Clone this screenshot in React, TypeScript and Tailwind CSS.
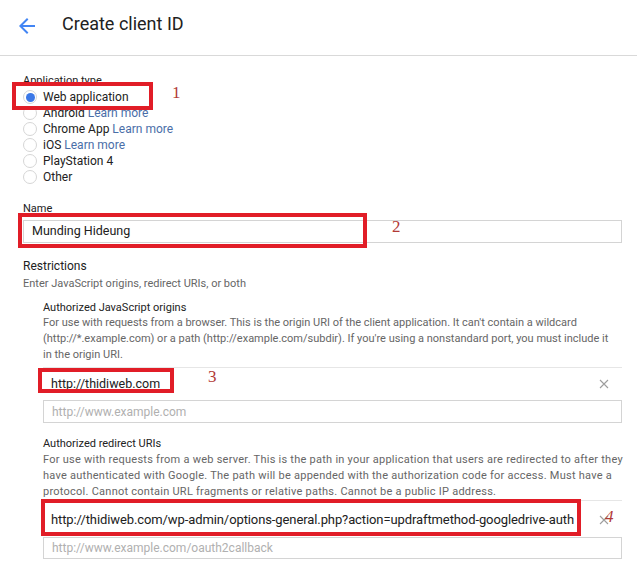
import React from "react";

const types = [
  { label: "Web application", learn: false, checked: true },
  { label: "Android", learn: true, checked: false },
  { label: "Chrome App", learn: true, checked: false },
  { label: "iOS", learn: true, checked: false },
  { label: "PlayStation 4", learn: false, checked: false },
  { label: "Other", learn: false, checked: false },
];

const originHelp = [
  "For use with requests from a browser. This is the origin URI of the client application. It can't contain a wildcard",
  "(http://*.example.com) or a path (http://example.com/subdir). If you're using a nonstandard port, you must include it",
  "in the origin URI.",
];

const redirectHelp = [
  "For use with requests from a web server. This is the path in your application that users are redirected to after they",
  "have authenticated with Google. The path will be appended with the authorization code for access. Must have a",
  "protocol. Cannot contain URL fragments or relative paths. Cannot be a public IP address.",
];

const Close: React.FC = () => (
  <svg width="10" height="10" viewBox="0 0 10 10" className="text-[#9e9e9e]">
    <path d="M1 1L9 9M9 1L1 9" stroke="currentColor" strokeWidth="1.1" />
  </svg>
);

const Radio: React.FC<{ checked: boolean }> = ({ checked }) => (
  <span className="flex h-[14px] w-[14px] items-center justify-center rounded-full border border-[#d6d6d6] bg-white">
    {checked && <span className="h-[9px] w-[9px] rounded-full bg-[#3b78e7]"></span>}
  </span>
);

// red annotation box + number drawn over the form
const Mark: React.FC<{ box: string; num: string; numPos: string; italic?: boolean }> = ({ box, num, numPos, italic }) => (
  <>
    <div className={"pointer-events-none absolute border-4 border-[#e11d27] " + box}></div>
    <span
      className={"absolute text-[17px] leading-none text-[#b23a36] " + numPos + (italic ? " italic" : "")}
      style={{ fontFamily: '"Liberation Serif", serif' }}
    >
      {num}
    </span>
  </>
);

export default function App() {
  return (
    <div className="relative h-[565px] w-[637px] overflow-hidden bg-white text-[#212121]" style={{ fontFamily: "Roboto, sans-serif" }}>
      <header className="flex h-[56px] border-b border-[#d9d9d9]">
        <div className="flex h-[46px] items-center pl-[15px]">
          <svg width="24" height="24" viewBox="0 0 24 24" className="mt-[5px] text-[#4285f4]">
            <path fill="currentColor" d="M20 11H7.83l5.59-5.59L12 4l-8 8 8 8 1.41-1.41L7.83 13H20v-2z" />
          </svg>
          <h1 className="ml-[23px] text-[18px] font-normal">Create client ID</h1>
        </div>
      </header>

      <main className="pl-[23px] pr-[15px] pt-[17px]">
        <div className="text-[11px] leading-[16px]">Application type</div>
        <ul className="text-[12px] leading-[16px]">
          {types.map((t) => (
            <li key={t.label} className="flex h-[16px] items-center gap-[6px]">
              <Radio checked={t.checked} />
              <span>
                {t.label}
                {t.learn && <span className="text-[#4a6ea8]"> Learn more</span>}
              </span>
            </li>
          ))}
        </ul>

        <div className="mt-[16px] text-[11px] leading-[16px]">Name</div>
        <div className="mt-[3px] flex h-[23px] items-center border border-[#d4d4d4] pl-[8px] text-[12.5px]">Munding Hideung</div>

        <div className="mt-[15px] text-[12px] leading-[17px]">Restrictions</div>
        <div className="text-[11px] leading-[17px] text-[#666]">Enter JavaScript origins, redirect URIs, or both</div>

        <section className="ml-[20px] mt-[9px]">
          <div className="text-[11px] leading-[14px] text-[#222]">Authorized JavaScript origins</div>
          <div className="text-[11px] leading-[16px] text-[#666]">
            {originHelp.map((line) => (
              <div key={line} className="whitespace-nowrap">
                {line}
              </div>
            ))}
          </div>
          <div className="mt-[4px] flex h-[33px] items-center justify-between border-t border-[#e6e6e6] pl-[8px] pr-[13px] text-[12.5px]">
            <span>http://thidiweb.com</span>
            <Close />
          </div>
          <div className="flex h-[23px] items-center border border-[#d4d4d4] pl-[8px] text-[12px] text-[#b0b0b0]">http://www.example.com</div>
        </section>

        <section className="ml-[20px] mt-[13px]">
          <div className="text-[11px] leading-[16px] text-[#222]">Authorized redirect URIs</div>
          <div className="text-[11px] leading-[16px] tracking-[0.25px] text-[#666]">
            {redirectHelp.map((line) => (
              <div key={line} className="whitespace-nowrap">
                {line}
              </div>
            ))}
          </div>
          <div className="flex h-[37px] items-center justify-between border-t border-[#e6e6e6] pl-[8px] pr-[13px] pt-[2px] text-[13px] tracking-[-0.1px]">
            <span>http://thidiweb.com/wp-admin/options-general.php?action=updraftmethod-googledrive-auth</span>
            <Close />
          </div>
          <div className="flex h-[22px] items-center border border-[#d4d4d4] pl-[8px] text-[12px] text-[#b0b0b0]">
            http://www.example.com/oauth2callback
          </div>
        </section>
      </main>

      <Mark box="left-[12px] top-[82px] h-[28px] w-[141px]" num="1" numPos="left-[172px] top-[84px]" />
      <Mark box="left-[18px] top-[213px] h-[35px] w-[349px]" num="2" numPos="left-[392px] top-[218px]" />
      <Mark box="left-[38px] top-[368px] h-[25px] w-[136px]" num="3" numPos="left-[208px] top-[368px]" />
      <Mark box="left-[41px] top-[499px] h-[37px] w-[540px]" num="4" numPos="left-[605px] top-[508px]" italic />
    </div>
  );
}
